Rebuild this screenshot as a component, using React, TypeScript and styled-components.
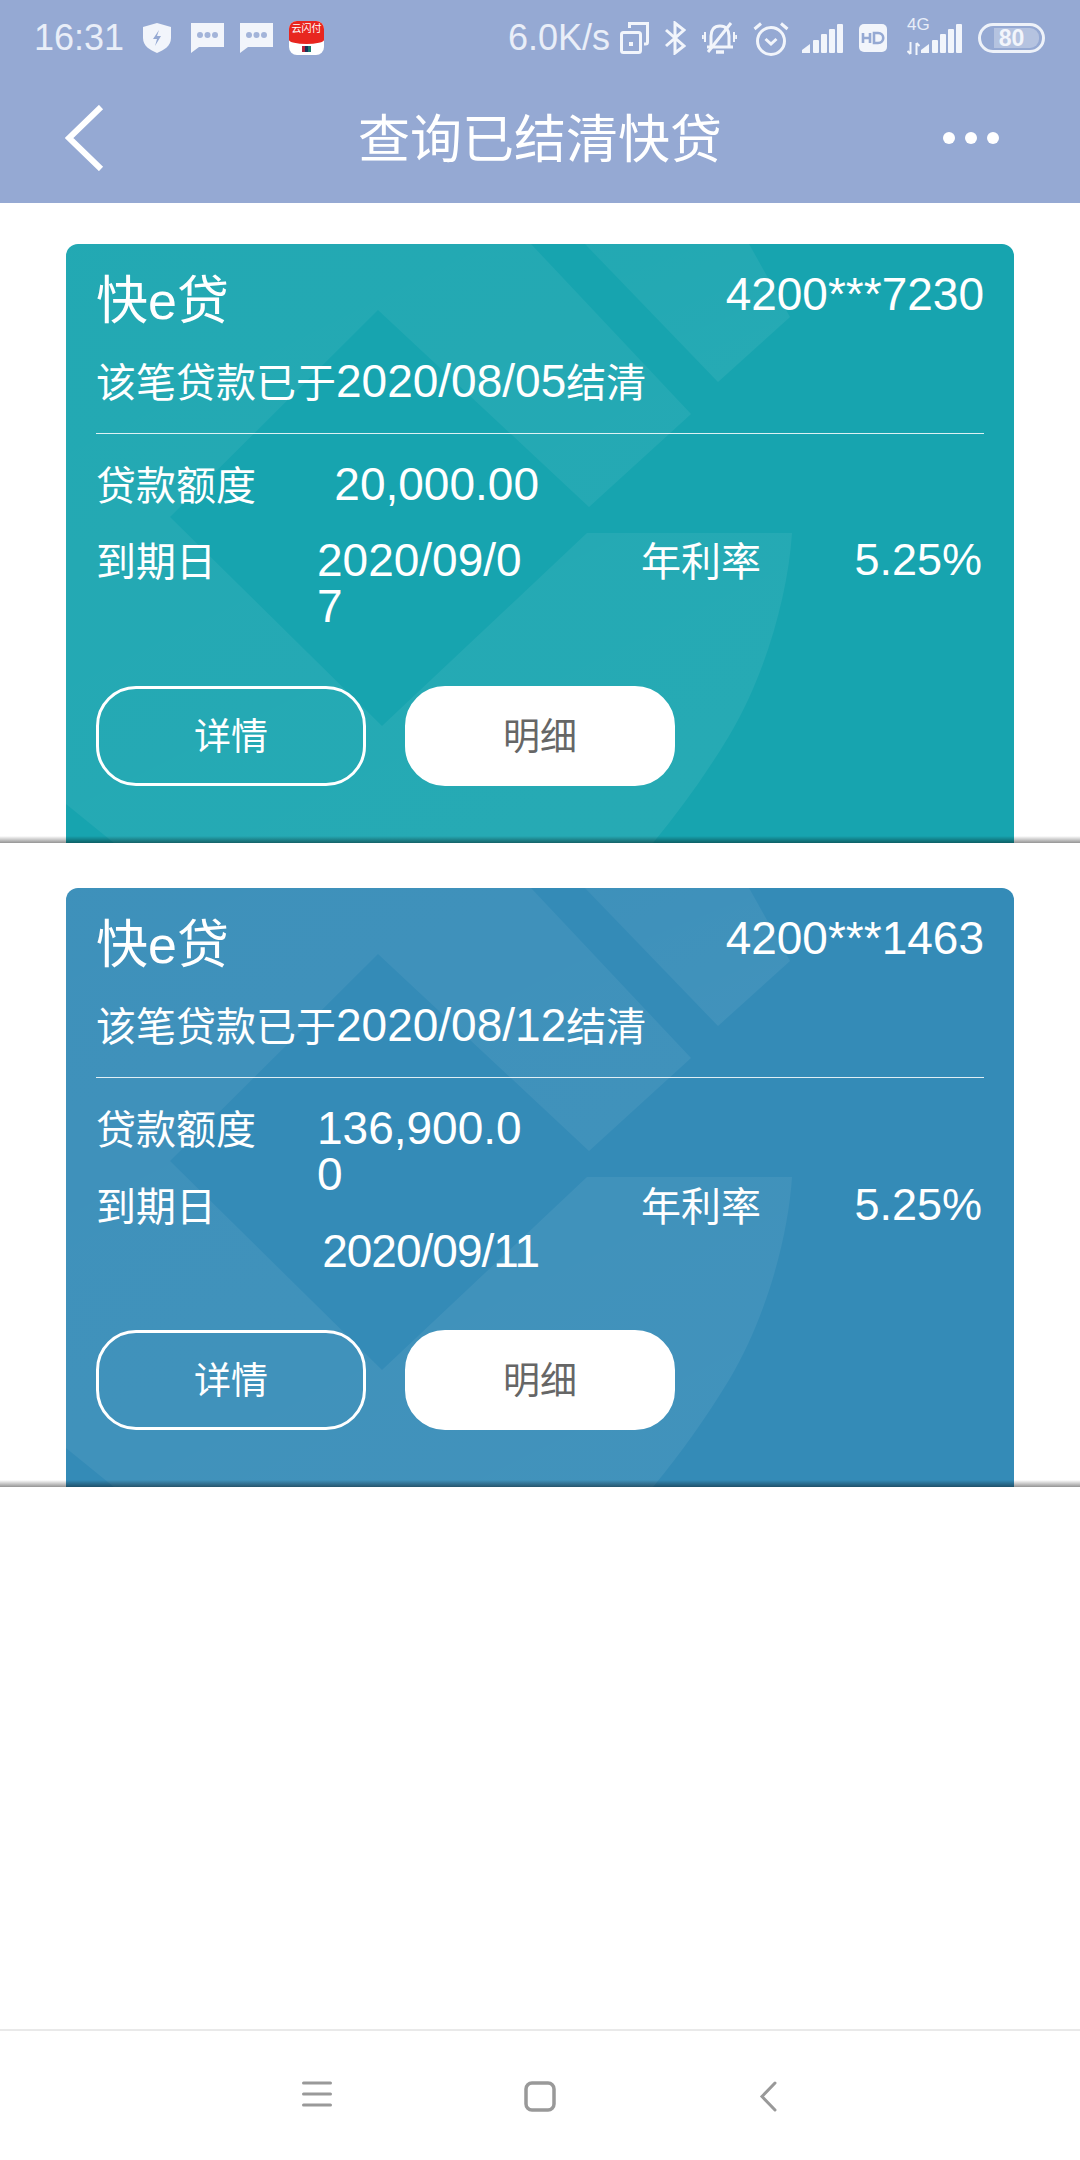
import React from "react";
import styled, { createGlobalStyle } from "styled-components";

const Global = createGlobalStyle`
  html, body { margin: 0; padding: 0; background: #fff; }
  body { font-family: "Liberation Sans", "Noto Sans CJK SC", sans-serif; }
  * { box-sizing: border-box; }
`;

const Page = styled.div`
  width: 1080px;
  height: 2160px;
  display: flex;
  flex-direction: column;
  background: #fff;
`;

const TopArea = styled.header`
  height: 203px;
  flex: none;
  background: #95a9d3;
  display: flex;
  flex-direction: column;
`;

const StatusBar = styled.div`
  height: 76px;
  padding: 0 35px 0 34px;
  display: flex;
  justify-content: space-between;
  align-items: center;
  color: #e9eef8;
`;

const StatusGroup = styled.div`
  display: flex;
  align-items: center;
  gap: 16px;
`;

const StatusText = styled.span<{ $after: number }>`
  font-size: 36px;
  line-height: 40px;
  margin-right: ${(p) => p.$after}px;
`;

const NetGroup = styled.div`
  position: relative;
  width: 55px;
  height: 34px;
  margin-left: 4px;
  display: flex;
  justify-content: flex-end;
  align-items: center;
`;

const NetLabel = styled.span`
  position: absolute;
  left: 0;
  top: -5px;
  font-size: 17px;
  line-height: 18px;
  color: #e9eef8;
`;

const NetArrows = styled.svg`
  position: absolute;
  left: 0;
  bottom: 0;
`;

const Battery = styled.div`
  position: relative;
  width: 67px;
  height: 30px;
  border: 3px solid #eef2f9;
  border-radius: 15px;
  display: flex;
  align-items: center;
  justify-content: center;
`;

const BatteryFill = styled.div`
  position: absolute;
  left: 13px;
  right: 3px;
  top: 2px;
  bottom: 2px;
  background: rgba(255, 255, 255, 0.3);
  border-radius: 0 9px 9px 0;
`;

const BatteryLevel = styled.span`
  position: relative;
  font-size: 23px;
  line-height: 24px;
  font-weight: 700;
  color: #f2f5fb;
`;

const AppBadge = styled.div`
  width: 35px;
  height: 34px;
  border-radius: 8px;
  overflow: hidden;
  background: #fff;
  display: flex;
  flex-direction: column;
  align-items: center;
`;

const AppBadgeTop = styled.div`
  width: 100%;
  height: 23px;
  background: #e8261f;
  border-radius: 0 0 50% 50% / 0 0 4px 4px;
  color: #fff;
  font-size: 10px;
  line-height: 16px;
  text-align: center;
  white-space: nowrap;
`;

const AppBadgeMark = styled.div`
  width: 9px;
  height: 6px;
  margin-top: 2px;
  background: linear-gradient(90deg, #b3263a 0 35%, #16335c 35% 70%, #177a6c 70%);
`;

const NavBar = styled.div`
  flex: 1;
  position: relative;
  display: flex;
  align-items: center;
  justify-content: space-between;
  padding: 0 81px 4px 65px;
`;

const NavTitle = styled.h1`
  position: absolute;
  left: 0;
  right: 0;
  top: 33px;
  margin: 0;
  text-align: center;
  color: #fff;
  font-size: 52px;
  line-height: 62px;
  font-weight: 400;
`;

const Dots = styled.div`
  display: flex;
  gap: 10px;
`;

const Dot = styled.span`
  width: 12px;
  height: 12px;
  border-radius: 50%;
  background: #fff;
`;

const Main = styled.main`
  flex: 1;
`;

const Item = styled.section<{ $top: number }>`
  position: relative;
  padding: ${(p) => p.$top}px 66px 0;
`;

const ItemShadow = styled.div`
  position: absolute;
  left: 0;
  right: 0;
  bottom: 0;
  height: 7px;
  background: linear-gradient(to bottom, rgba(0, 0, 0, 0), rgba(0, 0, 0, 0.42));
`;

const Card = styled.article<{ $base: string }>`
  position: relative;
  height: 599px;
  padding: 27px 30px 57px;
  border-radius: 12px 12px 0 0;
  overflow: hidden;
  color: #fff;
  background: ${(p) => p.$base};
`;

const Watermark = styled.svg`
  position: absolute;
  left: 0;
  top: 0;
`;

const CardBody = styled.div`
  position: relative;
  height: 100%;
  display: flex;
  flex-direction: column;
`;

const CardHead = styled.div`
  display: flex;
  justify-content: space-between;
  align-items: flex-start;
`;

const Product = styled.div`
  font-size: 52px;
  line-height: 60px;
`;

const Account = styled.div`
  font-size: 46px;
  line-height: 46px;
`;

const Settled = styled.div`
  margin-top: 25px;
  font-size: 40px;
  line-height: 50px;
`;

const SettledDate = styled.span`
  font-size: 46px;
`;

const Divider = styled.hr`
  width: 100%;
  margin: 25px 0 13px;
  border: 0;
  height: 1px;
  background: rgba(255, 255, 255, 0.85);
`;

const Row = styled.div<{ $height?: number }>`
  display: grid;
  grid-template-columns: 221px 222px 1fr auto;
  padding-top: 14px;
  ${(p) => (p.$height ? `height: ${p.$height}px;` : "")}
`;

const Label = styled.div<{ $offset?: number }>`
  font-size: 40px;
  line-height: 46px;
  padding-top: 2px;
  padding-left: ${(p) => p.$offset ?? 0}px;
`;

const ValueCell = styled.div`
  display: flex;
  justify-content: flex-end;
  align-items: flex-start;
`;

const Value = styled.div<{ $drop?: number; $tight?: boolean }>`
  font-size: 46px;
  line-height: 46px;
  word-break: break-all;
  margin-top: ${(p) => p.$drop ?? 0}px;
  letter-spacing: ${(p) => (p.$tight ? "-1px" : "0")};
`;

const Rate = styled.div`
  font-size: 45px;
  line-height: 46px;
  padding-right: 2px;
`;

const Actions = styled.div`
  display: flex;
  gap: 39px;
  margin-top: auto;
`;

const ActionButton = styled.button<{ $solid?: boolean }>`
  width: 270px;
  height: 100px;
  border-radius: 40px;
  border: 3px solid #fff;
  background: ${(p) => (p.$solid ? "#fff" : "transparent")};
  color: ${(p) => (p.$solid ? "#666" : "#fff")};
  font: inherit;
  font-size: 37px;
  padding: 0 0 4px;
`;

const BottomNav = styled.footer`
  height: 131px;
  flex: none;
  border-top: 2px solid #e9e9e9;
  display: grid;
  grid-template-columns: 302px 30px 192px 32px 203px 18px 1fr;
  padding-top: 50px;
`;

const NavIcon = styled.svg<{ $col: number }>`
  grid-column: ${(p) => p.$col};
  grid-row: 1;
`;

const ShieldIcon = styled.svg`
  margin-right: 4px;
`;

const SignalIcon = styled.svg<{ $pull?: number }>`
  margin-left: ${(p) => p.$pull ?? 0}px;
`;

const Shield = () => (
  <ShieldIcon width="28" height="30" viewBox="0 0 28 30">
    <path d="M14 0 L28 4 V15 C28 23 21 27 14 30 C7 27 0 23 0 15 V4 Z" fill="#f2f5fb" />
    <path d="M16 7 L10 16 H14 L12 23 L18 13 H14 Z" fill="#95a9d3" />
  </ShieldIcon>
);

const Message = () => (
  <svg width="33" height="30" viewBox="0 0 33 30">
    <path d="M0 0 H33 V24 H8 L0 30 Z" fill="#f2f5fb" />
    <circle cx="9" cy="12" r="3" fill="#a3b4d9" />
    <circle cx="16.5" cy="12" r="3" fill="#a3b4d9" />
    <circle cx="24" cy="12" r="3" fill="#a3b4d9" />
  </svg>
);

const Rotate = () => (
  <svg width="29" height="32" viewBox="0 0 29 32" fill="none" stroke="#f2f5fb" strokeWidth="3">
    <rect x="1.5" y="10.5" width="19" height="20" rx="2" />
    <path d="M9.5 6 V1.5 H27.5 V20 a2 2 0 0 1 -2 2 H24" />
    <rect x="9" y="20" width="4" height="4" fill="#f2f5fb" stroke="none" />
  </svg>
);

const Bluetooth = () => (
  <svg width="21" height="34" viewBox="0 0 21 34" fill="none" stroke="#f2f5fb" strokeWidth="3">
    <path d="M1 9 L19 25 L10 32 V2 L19 9 L1 25" />
  </svg>
);

const BellOff = () => (
  <svg width="35" height="33" viewBox="0 0 35 33" fill="none" stroke="#f2f5fb" strokeWidth="3">
    <path d="M9 24 V14 C9 8 12 4 18 4 C24 4 27 8 27 14 V24" />
    <path d="M5 25 H31" />
    <path d="M14 30 H22" strokeWidth="3.5" />
    <path d="M6 30 L29 1" />
    <path d="M3 10 V20 M0.8 13 V17 M32 10 V20 M34.2 13 V17" strokeWidth="2" />
  </svg>
);

const Alarm = () => (
  <svg width="36" height="35" viewBox="0 0 36 35" fill="none" stroke="#f2f5fb" strokeWidth="3">
    <circle cx="18" cy="20" r="13.5" />
    <path d="M1.5 8 L8 2.5 M34.5 8 L28 2.5" />
    <path d="M12.5 18 L18 23 L23.5 18" />
  </svg>
);

const Signal = ({ pull }: { pull?: number }) => (
  <SignalIcon $pull={pull} width="41" height="29" viewBox="0 0 41 29" fill="#f2f5fb">
    <path d="M0 29 V26 L8 20 V29 Z" />
    <rect x="11" y="16" width="6" height="13" rx="1" />
    <rect x="19" y="10" width="6" height="19" rx="1" />
    <rect x="27" y="5" width="6" height="24" rx="1" />
    <rect x="35" y="0" width="6" height="29" rx="1" />
  </SignalIcon>
);

const HdBadge = () => (
  <svg width="28" height="28" viewBox="0 0 28 28">
    <rect width="28" height="28" rx="5" fill="#f2f5fb" />
    <path d="M4 9 V19 M11 9 V19 M4 14 H11" stroke="#95a9d3" strokeWidth="2.6" fill="none" />
    <path d="M15 9 V19 H19 C26 19 26 9 19 9 Z" stroke="#95a9d3" strokeWidth="2.6" fill="none" />
  </svg>
);

const CardArt = ({ id }: { id: string }) => (
  <Watermark width="948" height="599" viewBox="0 0 948 599">
    <defs>
      <linearGradient id={id} x1="0" y1="0" x2="0.6" y2="1">
        <stop offset="0" stopColor="#fff" stopOpacity="0.05" />
        <stop offset="1" stopColor="#fff" stopOpacity="0.065" />
      </linearGradient>
    </defs>
    <path
      fill={`url(#${id})`}
      d="M0 0 H465 L625 170 L523 263 L312 66 L104 273 L316 482 L521 289 H726 C722 350 700 430 663 492 C640 530 615 565 587 599 H48 L0 560 Z"
    />
    <path fill={`url(#${id})`} d="M519 0 H683 L724 73 L652 138 Z" />
  </Watermark>
);

type Loan = {
  top: number;
  base: string;
  account: string;
  date: string;
  amount: string;
  due: string;
  rowHeight: number;
  dueDrop?: number;
  dueTight?: boolean;
};

const loans: Loan[] = [
  {
    top: 41,
    base: "#17a4af",
    account: "4200***7230",
    date: "2020/08/05",
    amount: "20,000.00",
    due: "2020/09/07",
    rowHeight: 76,
  },
  {
    top: 45,
    base: "#348bb7",
    account: "4200***1463",
    date: "2020/08/12",
    amount: "136,900.00",
    due: "2020/09/11",
    rowHeight: 77,
    dueDrop: 46,
    dueTight: true,
  },
];

export default function App() {
  return (
    <Page>
      <Global />
      <TopArea>
        <StatusBar>
          <StatusGroup>
            <StatusText $after={3}>16:31</StatusText>
            <Shield />
            <Message />
            <Message />
            <AppBadge>
              <AppBadgeTop>云闪付</AppBadgeTop>
              <AppBadgeMark />
            </AppBadge>
          </StatusGroup>
          <StatusGroup>
            <StatusText $after={-6}>6.0K/s</StatusText>
            <Rotate />
            <Bluetooth />
            <BellOff />
            <Alarm />
            <Signal pull={-3} />
            <HdBadge />
            <NetGroup>
              <NetLabel>4G</NetLabel>
              <NetArrows width="13" height="13" viewBox="0 0 13 13" fill="none" stroke="#f2f5fb" strokeWidth="2">
                <path d="M3.5 0 V12 M0.5 9 L3.5 12 M9.5 13 V1 M12.5 4 L9.5 1" />
              </NetArrows>
              <Signal />
            </NetGroup>
            <Battery>
              <BatteryFill />
              <BatteryLevel>80</BatteryLevel>
            </Battery>
          </StatusGroup>
        </StatusBar>
        <NavBar>
          <svg width="40" height="66" viewBox="0 0 40 66" fill="none" stroke="#fff" strokeWidth="6">
            <path d="M36 2 L4 33 L36 64" />
          </svg>
          <NavTitle>查询已结清快贷</NavTitle>
          <Dots>
            <Dot />
            <Dot />
            <Dot />
          </Dots>
        </NavBar>
      </TopArea>
      <Main>
        {loans.map((loan) => (
          <Item key={loan.account} $top={loan.top}>
            <Card $base={loan.base}>
              <CardArt id={`art-${loan.account.slice(-4)}`} />
              <CardBody>
                <CardHead>
                  <Product>快e贷</Product>
                  <Account>{loan.account}</Account>
                </CardHead>
                <Settled>
                  该笔贷款已于<SettledDate>{loan.date}</SettledDate>结清
                </Settled>
                <Divider />
                <Row $height={loan.rowHeight}>
                  <Label>贷款额度</Label>
                  <ValueCell>
                    <Value>{loan.amount}</Value>
                  </ValueCell>
                </Row>
                <Row>
                  <Label>到期日</Label>
                  <ValueCell>
                    <Value $drop={loan.dueDrop} $tight={loan.dueTight}>
                      {loan.due}
                    </Value>
                  </ValueCell>
                  <Label $offset={102}>年利率</Label>
                  <Rate>5.25%</Rate>
                </Row>
                <Actions>
                  <ActionButton>详情</ActionButton>
                  <ActionButton $solid>明细</ActionButton>
                </Actions>
              </CardBody>
            </Card>
            <ItemShadow />
          </Item>
        ))}
      </Main>
      <BottomNav>
        <NavIcon $col={2} width="30" height="26" viewBox="0 0 30 26" fill="none" stroke="#999" strokeWidth="3" strokeLinecap="round">
          <path d="M1.5 2 H28.5 M1.5 13 H28.5 M1.5 24 H28.5" />
        </NavIcon>
        <NavIcon $col={4} width="32" height="31" viewBox="0 0 32 31" fill="none" stroke="#999" strokeWidth="3.5">
          <rect x="2" y="2" width="28" height="27" rx="6" />
        </NavIcon>
        <NavIcon $col={6} width="18" height="31" viewBox="0 0 18 31" fill="none" stroke="#999" strokeWidth="3" strokeLinecap="round">
          <path d="M16 2 L3 15.5 L16 29" />
        </NavIcon>
      </BottomNav>
    </Page>
  );
}
